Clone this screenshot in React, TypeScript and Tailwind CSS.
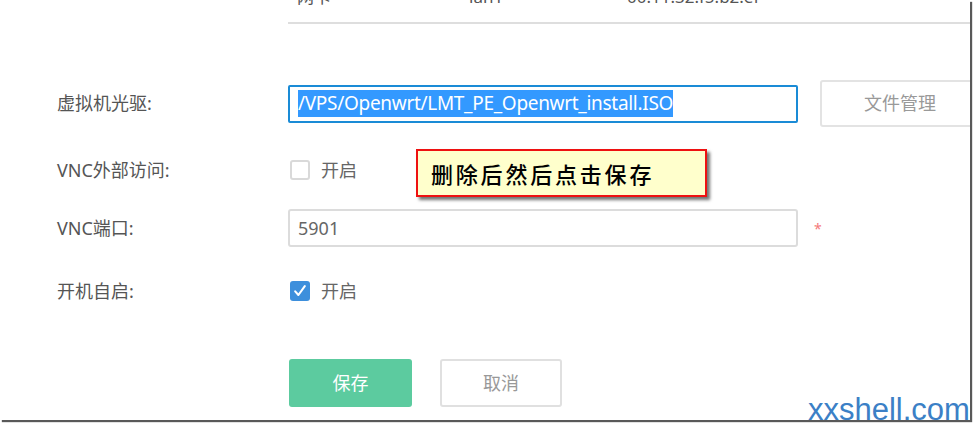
const font = { fontFamily: '"Noto Sans", "Noto Sans CJK SC", sans-serif' };

const Checkbox = ({ checked }: { checked?: boolean }) =>
  checked ? (
    <span className="flex h-[20px] w-[20px] items-center justify-center rounded-[3px] bg-[#3d8fdc]">
      <svg viewBox="0 0 20 20" className="h-[16px] w-[16px]">
        <path d="M4 10.5 L8 15 L16 4" fill="none" stroke="#fff" strokeWidth="2.6" strokeLinecap="round" strokeLinejoin="round" />
      </svg>
    </span>
  ) : (
    <span className="h-[20px] w-[20px] rounded-[3px] border-2 border-[#d9d9d9] bg-white" />
  );

export default function App() {
  return (
    <div className="relative h-[423px] w-[973px] overflow-hidden bg-white" style={font}>
      <div className="relative h-[420px] w-[970px] overflow-hidden bg-white shadow-[2px_2px_1px_rgba(60,60,60,0.85)]">
        {/* cut-off table row */}
        <div className="ml-[288px] flex h-[24px] items-end border-b-2 border-[#dedede] text-[17px] text-[#555]">
          <div className="-mb-[4px] flex h-[24px] -translate-y-[17px] items-center">
            <span className="w-[181px] pl-[9px]">网卡</span>
            <span className="w-[158px]">lan1</span>
            <span>00:11:32:f5:b2:ef</span>
          </div>
        </div>

        <div className="mt-[56px] flex h-[47px] items-center">
          <div className="w-[288px] shrink-0 pl-[57px] text-[18px] text-[#555]">虚拟机光驱:</div>
          <div className="flex h-[38px] w-[510px] shrink-0 items-center rounded-[2px] border-2 border-[#1a8bd6] pl-[8px]">
            <span className="bg-[#3399ff] py-[1px] text-[19px] leading-[25px] tracking-[-0.3px] text-white">
              /VPS/Openwrt/LMT_PE_Openwrt_install.ISO
            </span>
          </div>
          <div className="ml-[22px] flex h-[47px] w-[160px] shrink-0 items-center justify-center rounded-[3px] border-2 border-[#e3e3e3] text-[18px] text-[#999]">
            文件管理
          </div>
        </div>

        <div className="mt-[23px] flex h-[40px] items-center">
          <div className="w-[288px] shrink-0 pl-[57px] text-[18px] text-[#555]">VNC外部访问:</div>
          <div className="flex items-center pl-[2px]">
            <Checkbox />
            <span className="ml-[11px] text-[18px] text-[#666]">开启</span>
          </div>
        </div>

        <div className="mt-[19px] flex h-[38px] items-center">
          <div className="w-[288px] shrink-0 pl-[57px] text-[18px] text-[#555]">VNC端口:</div>
          <div className="flex h-[38px] w-[510px] shrink-0 items-center rounded-[3px] border-2 border-[#dcdcdc] pl-[8px] text-[18px] text-[#666]">
            5901
          </div>
          <span className="ml-[16px] text-[14px] text-[#f47a7a]">*</span>
        </div>

        <div className="mt-[24px] flex h-[40px] items-center">
          <div className="w-[288px] shrink-0 pl-[57px] text-[18px] text-[#555]">开机自启:</div>
          <div className="flex items-center pl-[2px]">
            <Checkbox checked />
            <span className="ml-[11px] text-[18px] text-[#666]">开启</span>
          </div>
        </div>

        <div className="ml-[289px] mt-[48px] flex gap-[28px]">
          <button className="h-[48px] w-[123px] rounded-[3px] bg-[#5ccb9f] text-[18px] text-white">保存</button>
          <button className="h-[48px] w-[122px] rounded-[3px] border-2 border-[#e0e0e0] bg-white text-[18px] text-[#999]">取消</button>
        </div>

        {/* annotation */}
        <div
          className="absolute left-[416px] top-[149px] flex h-[48px] w-[291px] items-center border-2 border-[#ee1111] bg-[#ffffcc] pl-[13px] text-[22px] font-medium tracking-[2.8px] text-black shadow-[3px_3px_3px_rgba(0,0,0,0.55)]"
          style={{ fontFamily: '"Noto Sans CJK SC", sans-serif' }}
        >
          删除后然后点击保存
        </div>
      </div>

      <div
        className="absolute left-[808px] top-[390px] text-[31px] leading-[40px] text-[#3b80c6]"
        style={{ fontFamily: '"Liberation Sans", Arial, sans-serif' }}
      >
        xxshell.com
      </div>
    </div>
  );
}
